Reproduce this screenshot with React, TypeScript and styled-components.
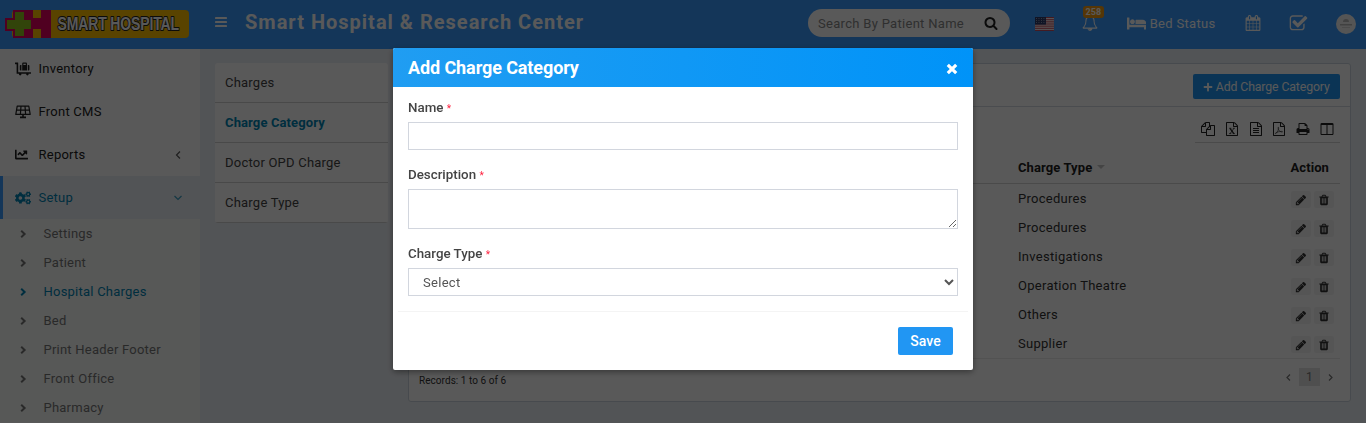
import React from "react";
import styled, { createGlobalStyle, css } from "styled-components";
import { FaChartLine, FaCogs, FaLuggageCart, FaPlus } from "react-icons/fa";

const GlobalStyle = createGlobalStyle`
  *, *::before, *::after { box-sizing: border-box; }
  html, body { margin: 0; padding: 0; height: 100%; overflow: hidden; }
  body {
    font-family: Roboto, "Liberation Sans", sans-serif;
    font-size: 13px;
    line-height: 19px;
    color: #333;
    background: #ecf0f5;
  }
`;

/* ---------- icons ---------- */

const FILE_BASE =
  "M1596 380q28 28 48 76t20 88v1152q0 40-28 68t-68 28h-1344q-40 0-68-28t-28-68v-1600q0-40 28-68t68-28h896q40 0 88 20t76 48zm-444-244v376h376q-10-29-22-41l-313-313q-12-12-41-22zm384 1528v-1024h-416q-40 0-68-28t-28-68v-416h-768v1536h1280z";

const PATHS = {
  pencil:
    "M491 1536l91-91-235-235-91 91v107h128v128h107zm523-928q0-22-22-22-10 0-17 7l-542 542q-7 7-7 17 0 22 22 22 10 0 17-7l542-542q7-7 7-17zm-54-192l416 416-832 832h-416v-416zm683 96q0 53-37 90l-166 166-416-416 166-165q36-38 90-38 53 0 91 38l235 234q37 39 37 91z",
  trash:
    "M704 1376v-704q0-14-9-23t-23-9h-64q-14 0-23 9t-9 23v704q0 14 9 23t23 9h64q14 0 23-9t9-23zm256 0v-704q0-14-9-23t-23-9h-64q-14 0-23 9t-9 23v704q0 14 9 23t23 9h64q14 0 23-9t9-23zm256 0v-704q0-14-9-23t-23-9h-64q-14 0-23 9t-9 23v704q0 14 9 23t23 9h64q14 0 23-9t9-23zm-544-992h448l-48-117q-7-9-17-11h-317q-10 2-17 11zm928 32v64q0 14-9 23t-23 9h-96v948q0 83-47 143.5t-113 60.5h-832q-66 0-113-58.5t-47-141.5v-952h-96q-14 0-23-9t-9-23v-64q0-14 9-23t23-9h309l70-167q15-37 54-63t79-26h320q40 0 79 26t54 63l70 167h309q14 0 23 9t9 23z",
  search:
    "M1216 832q0-185-131.5-316.5t-316.5-131.5-316.5 131.5-131.5 316.5 131.5 316.5 316.5 131.5 316.5-131.5 131.5-316.5zm512 832q0 52-38 90t-90 38q-54 0-90-38l-343-342q-179 124-399 124-143 0-273.5-55.5t-225-150-150-225-55.5-273.5 55.5-273.5 150-225 225-150 273.5-55.5 273.5 55.5 225 150 150 225 55.5 273.5q0 220-124 399l343 343q37 37 37 90z",
  print:
    "M448 1536h896v-256h-896v256zm0-640h896v-384h-160q-40 0-68-28t-28-68v-160h-640v640zm1152 64q0-26-19-45t-45-19-45 19-19 45 19 45 45 19 45-19 19-45zm128 0v416q0 13-9.5 22.5t-22.5 9.5h-224v160q0 40-28 68t-68 28h-960q-40 0-68-28t-28-68v-160h-224q-13 0-22.5-9.5t-9.5-22.5v-416q0-79 56.5-135.5t135.5-56.5h64v-544q0-40 28-68t68-28h672q40 0 88 20t76 48l152 152q28 28 48 76t20 88v256h64q79 0 135.5 56.5t56.5 135.5z",
  columns:
    "M224 1536h608v-1152h-640v1120q0 13 9.5 22.5t22.5 9.5zm1376-32v-1120h-640v1152h608q13 0 22.5-9.5t9.5-22.5zm128-1216v1216q0 66-47 113t-113 47h-1344q-66 0-113-47t-47-113v-1216q0-66 47-113t113-47h1344q66 0 113 47t47 113z",
  text:
    FILE_BASE +
    "M512 800q0-14 9-23t23-9h704q14 0 23 9t9 23v64q0 14-9 23t-23 9h-704q-14 0-23-9t-9-23v-64zm736 224q14 0 23 9t9 23v64q0 14-9 23t-23 9h-704q-14 0-23-9t-9-23v-64q0-14 9-23t23-9h704zm0 256q14 0 23 9t9 23v64q0 14-9 23t-23 9h-704q-14 0-23-9t-9-23v-64q0-14 9-23t23-9h704z",
  copy: "M1696 384q40 0 68 28t28 68v1216q0 40-28 68t-68 28h-960q-40 0-68-28t-28-68v-288h-544q-40 0-68-28t-28-68v-672q0-40 20-88t48-76l408-408q28-28 76-48t88-20h416q40 0 68 28t28 68v328q68-40 128-40h416zm-544 213l-299 299h299v-299zm-640-384l-299 299h299v-299zm196 647l316-316v-416h-384v416q0 40-28 68t-68 28h-416v640h512v-256q0-40 20-88t48-76zm956 804v-1152h-384v416q0 40-28 68t-68 28h-416v640h896z",
  calendar:
    "M192 1664h288v-288h-288v288zm352 0h320v-288h-320v288zm-352-352h288v-320h-288v320zm352 0h320v-320h-320v320zm-352-384h288v-288h-288v288zm736 736h320v-288h-320v288zm-384-736h320v-288h-320v288zm768 736h288v-288h-288v288zm-384-352h320v-320h-320v320zm-352-864v-288q0-13-9.5-22.5t-22.5-9.5h-64q-13 0-22.5 9.5t-9.5 22.5v288q0 13 9.5 22.5t22.5 9.5h64q13 0 22.5-9.5t9.5-22.5zm736 864h288v-320h-288v320zm-384-384h320v-288h-320v288zm384 0h288v-288h-288v288zm32-480v-288q0-13-9.5-22.5t-22.5-9.5h-64q-13 0-22.5 9.5t-9.5 22.5v288q0 13 9.5 22.5t22.5 9.5h64q13 0 22.5-9.5t9.5-22.5zm384-64v1280q0 52-38 90t-90 38h-1408q-52 0-90-38t-38-90v-1280q0-52 38-90t90-38h128v-96q0-66 47-113t113-47h64q66 0 113 47t47 113v96h384v-96q0-66 47-113t113-47h64q66 0 113 47t47 113v96h128q52 0 90 38t38 90z",
  check:
    "M1472 930v318q0 119-84.5 203.5t-203.5 84.5h-832q-119 0-203.5-84.5t-84.5-203.5v-832q0-119 84.5-203.5t203.5-84.5h832q63 0 117 25 15 7 18 23 3 17-9 29l-49 49q-10 10-23 10-3 0-9-2-23-6-45-6h-832q-66 0-113 47t-47 113v832q0 66 47 113t113 47h832q66 0 113-47t47-113v-254q0-13 9-22l64-64q10-10 23-10 6 0 12 3 20 8 20 29zm231-489l-814 814q-24 24-57 24t-57-24l-430-430q-24-24-24-57t24-57l110-110q24-24 57-24t57 24l263 263 647-647q24-24 57-24t57 24l110 110q24 24 24 57t-24 57z",
  bell: "M912 1696q0-16-16-16-59 0-101.5-42.5t-42.5-101.5q0-16-16-16t-16 16q0 73 51.5 124.5t124.5 51.5q16 0 16-16zm-666-288h1300q-266-300-266-832 0-51-24-105t-69-103-121.5-80.5-169.5-31.5-169.5 31.5-121.5 80.5-69 103-24 105q0 532-266 832zm1482 0q0 52-38 90t-90 38h-448q0 106-75 181t-181 75-181-75-75-181h-448q-52 0-90-38t-38-90q50-42 91-88t85-119.5 74.5-158.5 50-206 19.5-260q0-152 117-282.5t307-158.5q-8-19-8-39 0-40 28-68t68-28 68 28 28 68q0 20-8 39 190 28 307 158.5t117 282.5q0 139 19.5 260t50 206 74.5 158.5 85 119.5 91 88z",
};

const Glyph = ({ name, size }: { name: keyof typeof PATHS; size: number }) => (
  <svg width={size} height={size} viewBox="0 0 1792 1792" fill="currentColor" aria-hidden>
    <path d={PATHS[name]} />
  </svg>
);

const BarsIcon = () => (
  <svg width="12" height="10" viewBox="0 0 12 10" fill="currentColor" aria-hidden>
    <rect width="12" height="2" rx="0.4" />
    <rect y="4" width="12" height="2" rx="0.4" />
    <rect y="8" width="12" height="2" rx="0.4" />
  </svg>
);

const BedIcon = () => (
  <svg width="19.4" height="17" viewBox="0 0 2048 1792" fill="currentColor" aria-hidden>
    <path d="M256 1024h1728q26 0 45 19t19 45v448h-256v-256h-1536v256h-256v-1216q0-26 19-45t45-19h128q26 0 45 19t19 45v704zm576-320q0-106-75-181t-181-75-181 75-75 181 75 181 181 75 181-75 75-181zm1216 256v-64q0-159-112.5-271.5t-271.5-112.5h-704q-26 0-45 19t-19 45v384h1408z" />
  </svg>
);

const SolarPanelIcon = () => (
  <svg width="16" height="14" viewBox="0 0 16 14" fill="none" stroke="currentColor" strokeWidth="1.2" aria-hidden>
    <path d="M2.2 1.1H13.8L15.2 9.4H0.8ZM1.5 5.2H14.5M6 1.1L5.4 9.4M10 1.1L10.6 9.4" strokeLinejoin="round" />
    <path d="M8 9.4V12.3M5 12.4H11" strokeWidth="1.6" />
  </svg>
);

const ExcelIcon = ({ size }: { size: number }) => (
  <svg width={size} height={size} viewBox="0 0 1792 1792" fill="none" stroke="currentColor" aria-hidden>
    <path d={FILE_BASE} fill="currentColor" stroke="none" />
    <path d="M640 810L1130 1480" strokeWidth="170" />
    <path d="M1140 810L660 1480M540 800h280M1000 800h260M530 1485h270M990 1485h270" strokeWidth="100" />
  </svg>
);

const PdfIcon = ({ size }: { size: number }) => (
  <svg width={size} height={size} viewBox="0 0 1792 1792" fill="none" stroke="currentColor" aria-hidden>
    <path d={FILE_BASE} fill="currentColor" stroke="none" />
    <path
      d="M430 1500q180-60 330-400 130-300 70-420-60-30-60 80 30 280 240 430 200 130 340 90 20-90-180-80-420 20-680 190-90 60-60 110z"
      strokeWidth="75"
    />
  </svg>
);

const Chevron = ({ d, w, h, stroke = 1.2 }: { d: string; w: number; h: number; stroke?: number }) => (
  <svg width={w} height={h} viewBox={`0 0 ${w} ${h}`} fill="none" stroke="currentColor" strokeWidth={stroke} aria-hidden>
    <path d={d} />
  </svg>
);

const Logo = () => (
  <svg width="190" height="30" viewBox="0 0 190 30" role="img" aria-label="Smart Hospital">
    <rect x="12" y="1" width="177" height="28" rx="4" fill="#ffbf00" />
    <path d="M13 1H33V29H13V22H5V9H13ZM33 9H41V1H51V29H41V20H33Z" fill="#e4005e" />
    <path d="M15 3H24V11H31V20H24V27H15V20H7V11H15Z" fill="#8fc31f" />
    <text
      transform="translate(57.5 21.2) scale(0.8 1)"
      fontFamily='"Liberation Sans", sans-serif'
      fontWeight="700"
      fontSize="17.5"
      textLength="152"
      fill="#fff"
      stroke="#222"
      strokeWidth="2"
      strokeLinejoin="round"
      paintOrder="stroke"
    >
      SMART HOSPITAL
    </text>
  </svg>
);

const Flag = () => (
  <svg width="19" height="14" viewBox="0 0 19 14" aria-hidden>
    <rect width="19" height="14" fill="#fff" />
    {[0, 1, 2, 3, 4, 5, 6].map((i) => (
      <rect key={i} y={i * 2.15} width="19" height="1.08" fill="#c0475a" />
    ))}
    <rect width="11" height="7.6" fill="#2b3a6b" />
    {[1.5, 3.5, 5.5].map((y) =>
      [1.5, 4, 6.5, 9].map((x) => <circle key={`${x}-${y}`} cx={x} cy={y} r="0.4" fill="#fff" />)
    )}
  </svg>
);

/* ---------- top bar ---------- */

const TopBar = styled.header`
  display: flex;
  align-items: center;
  height: 49px;
  padding: 0 10px 0 0;
  background: #399bff;
  color: #fff;
`;
const LogoCell = styled.div`
  width: 215px;
  height: 30px;
  margin-top: -1px;
`;
const MenuToggle = styled.button`
  display: flex;
  width: 30px;
  padding: 0;
  border: 0;
  margin-top: -5px;
  background: none;
  color: #fff;
`;
const Brand = styled.div`
  flex: 1;
  font-size: 20px;
  font-weight: 700;
  line-height: 26px;
  letter-spacing: 1px;
  margin-top: -5px;
`;
const SearchBox = styled.div`
  display: flex;
  align-items: center;
  justify-content: space-between;
  width: 202px;
  height: 28px;
  margin-top: -3px;
  padding: 0 12px 0 10px;
  border-radius: 14px;
  background: #fff;
  color: #222;
  svg { display: block; }
`;
const SearchText = styled.span`
  color: #888;
  letter-spacing: 0.3px;
`;
const NavIcons = styled.nav`
  display: flex;
  align-items: center;
  width: 346px;
  height: 30px;
  margin-top: -2px;
  padding-left: 25px;
  svg { display: block; }
`;
const BellCell = styled.div`
  position: relative;
  margin: -2px 0 0 28px;
  width: 16px;
`;
const BellBadge = styled.span`
  position: absolute;
  left: 1px;
  top: -9px;
  width: 21px;
  height: 12px;
  border-radius: 3px;
  background: #f39c12;
  color: #fff;
  font-size: 9px;
  font-weight: 700;
  line-height: 12px;
  text-align: center;
  letter-spacing: 0.2px;
`;
const BedStatus = styled.div`
  display: flex;
  align-items: center;
  gap: 3.4px;
  width: 119px;
  margin-left: 29px;
  letter-spacing: 0.3px;
`;
const NavCell = styled.div<{ $w: number }>`
  width: ${(p) => p.$w}px;
  margin-top: -1px;
`;
const Avatar = styled.div`
  display: flex;
  align-items: center;
  justify-content: center;
  width: 20px;
  height: 20px;
  border-radius: 50%;
  background: #f3f3f3;
  color: #bbb;
`;

/* ---------- page frame ---------- */

const Body = styled.div`
  display: flex;
  height: 374px;
  overflow: hidden;
`;
const Sidebar = styled.aside`
  width: 200px;
  height: 400px;
  margin-top: -2px;
  background: #fff;
`;
const MenuItem = styled.div<{ $active?: boolean }>`
  display: flex;
  align-items: center;
  height: 43px;
  padding: 0 18px 0 15px;
  color: #222;
  letter-spacing: 0.25px;
  > svg { opacity: 0.75; }
  ${(p) =>
    p.$active &&
    css`
      padding-left: 12px;
      border-left: 3px solid #399bff;
      background: #ecf0f5;
      color: #0084b4;
    `}
`;
const MenuIcon = styled.span`
  display: flex;
  width: 23.5px;
  svg { display: block; }
`;
const MenuLabel = styled.span`
  flex: 1;
`;
const SubMenu = styled.div`
  background: #f9fbf9;
`;
const SubItem = styled.div<{ $active?: boolean }>`
  display: flex;
  align-items: center;
  height: 29px;
  padding-left: 20px;
  color: ${(p) => (p.$active ? "#0084b4" : "#777")};
  letter-spacing: 0.23px;
  svg { display: block; margin-right: 16.5px; }
`;
const Content = styled.main`
  display: flex;
  flex: 1;
  align-items: flex-start;
  gap: 20px;
  padding: 14px 15px;
`;
const TabList = styled.div`
  width: 173px;
  border-radius: 3px;
  overflow: hidden;
  background: #fff;
`;
const Tab = styled.div<{ $active?: boolean }>`
  height: 40px;
  padding: 0 10px;
  border-bottom: 1px solid #d0d0d0;
  line-height: 39px;
  letter-spacing: ${(p) => (p.$active ? "0.12px" : "0.22px")};
  font-weight: ${(p) => (p.$active ? 700 : 400)};
  color: ${(p) => (p.$active ? "#0084b4" : "#444")};
`;
const Panel = styled.section`
  flex: 1;
  height: 339px;
  border: 1px solid #cbd5df;
  border-radius: 3px;
  background: #fff;
`;
const PanelHead = styled.div`
  display: flex;
  justify-content: flex-end;
  height: 43px;
  padding: 10px 10px 0;
  border-bottom: 1px solid #d5dbe2;
`;
const AddButton = styled.button`
  display: flex;
  align-items: center;
  justify-content: center;
  gap: 2.5px;
  width: 147px;
  height: 25px;
  padding: 1px 0 0;
  border: 0;
  border-radius: 2px;
  background: #2196f3;
  color: #fff;
  font: 400 12.3px/19px Roboto, sans-serif;
  letter-spacing: -0.12px;
`;
const PanelBody = styled.div`
  display: flex;
  flex-direction: column;
  padding: 9px 10px 0;
`;
const ExportBar = styled.div`
  display: flex;
  align-items: center;
  align-self: flex-end;
  justify-content: space-between;
  width: 145px;
  height: 27px;
  padding: 0 6px;
  border-bottom: 1px solid #d5d5d5;
  color: #222;
  svg { display: block; }
`;
const Table = styled.div`
  border-bottom: 1px solid #eaeaea;
  letter-spacing: 0.28px;
`;
const Row = styled.div<{ $head?: boolean }>`
  display: grid;
  grid-template-columns: 1fr 261px 61px;
  align-items: center;
  height: ${(p) => (p.$head ? 41 : 29)}px;
  ${(p) =>
    p.$head &&
    css`
      padding-top: 8px;
      border-bottom: 1px solid #d5d5d5;
      font-weight: 700;
      letter-spacing: 0.1px;
      color: #222;
    `}
`;
const TypeCell = styled.div`
  display: flex;
  align-items: center;
  gap: 5px;
`;
const SortCaret = styled.span`
  border: 4px solid transparent;
  border-top-color: #c4c4c4;
  border-bottom: 0;
`;
const ActionCell = styled.div<{ $head?: boolean }>`
  display: flex;
  gap: 3px;
  padding-right: ${(p) => (p.$head ? 11 : 6)}px;
  margin-top: ${(p) => (p.$head ? 0 : 2)}px;
  justify-content: flex-end;
`;
const IconButton = styled.button`
  display: flex;
  align-items: center;
  justify-content: center;
  width: 20px;
  height: 17px;
  padding: 0;
  border: 0;
  border-radius: 2px;
  background: #f4f4f4;
  color: #333;
`;
const TableFoot = styled.div`
  display: flex;
  align-items: center;
  justify-content: space-between;
  height: 40px;
  font-size: 10px;
  letter-spacing: 0.05px;
`;
const Records = styled.span`
  margin-top: 2px;
`;
const Pager = styled.div`
  display: flex;
  align-items: center;
  gap: 8px;
  padding-right: 7px;
  margin-top: -4px;
  color: #777;
`;
const PageNumber = styled.span`
  width: 21px;
  height: 18px;
  background: #e1e1e1;
  font-size: 12px;
  line-height: 18px;
  text-align: center;
`;

/* ---------- dialog ---------- */

const Backdrop = styled.div`
  position: fixed;
  inset: 0;
  display: flex;
  align-items: flex-start;
  justify-content: center;
  padding-top: 48px;
  background: rgba(0, 0, 0, 0.65);
`;
const Dialog = styled.form`
  width: 580px;
  height: 322px;
  border-radius: 2px;
  overflow: hidden;
  background: #fff;
  box-shadow: 0 2px 6px rgba(0, 0, 0, 0.4);
`;
const DialogHead = styled.div`
  display: flex;
  align-items: center;
  justify-content: space-between;
  height: 39px;
  padding: 0 15px;
  background: linear-gradient(to right, #209df2, #0093f8);
  color: #fff;
`;
const DialogTitle = styled.h4`
  margin: 0;
  font-size: 18px;
  font-weight: 700;
  line-height: 24px;
  letter-spacing: -0.1px;
`;
const CloseButton = styled.button`
  display: flex;
  padding: 0;
  border: 0;
  margin-top: 3px;
  background: none;
  color: #fff;
`;
const DialogBody = styled.div`
  padding: 11px 15px 0;
`;
const Field = styled.div`
  display: flex;
  flex-direction: column;
  margin-bottom: 15px;
`;
const Label = styled.label`
  margin-bottom: 5px;
  font-size: 13.33px;
  font-weight: 500;
  height: 19px;
  line-height: 19px;
  color: #444;
`;
const Required = styled.small`
  font-size: 10px;
  font-weight: 400;
  color: #ff1f3d;
`;
const control = css`
  display: block;
  width: 100%;
  border: 1px solid #d2d6de;
  border-radius: 0;
  outline: 0;
  background: #fff;
  color: #555;
  font: 400 13px/19px Roboto, sans-serif;
  letter-spacing: 0.3px;
`;
const Input = styled.input`
  ${control}
  height: 28px;
  padding: 4px 10px;
`;
const TextArea = styled.textarea`
  ${control}
  height: 40px;
  padding: 4px 10px;
`;
const Select = styled.select`
  ${control}
  height: 28px;
  padding: 3px 0 3px 10px;
`;
const DialogFoot = styled.div`
  display: flex;
  justify-content: flex-end;
  margin: 0 5px;
  padding: 15px 15px 0;
  border-top: 1px solid #f4f4f4;
`;
const SaveButton = styled.button`
  width: 55px;
  height: 28px;
  padding: 0;
  border: 0;
  border-radius: 2px;
  background: #2196f3;
  color: #fff;
  font: 500 14px/20px Roboto, sans-serif;
`;

const subItems = ["Settings", "Patient", "Hospital Charges", "Bed", "Print Header Footer", "Front Office", "Pharmacy"];
const tabs = ["Charges", "Charge Category", "Doctor OPD Charge", "Charge Type"];
const chargeTypes = ["Procedures", "Procedures", "Investigations", "Operation Theatre", "Others", "Supplier"];

const TopNavigation = () => (
  <TopBar>
    <LogoCell><Logo /></LogoCell>
    <MenuToggle type="button" aria-label="Toggle menu"><BarsIcon /></MenuToggle>
    <Brand>Smart Hospital &amp; Research Center</Brand>
    <SearchBox>
      <SearchText>Search By Patient Name</SearchText>
      <Glyph name="search" size={14} />
    </SearchBox>
    <NavIcons>
      <Flag />
      <BellCell>
        <Glyph name="bell" size={16} />
        <BellBadge>258</BellBadge>
      </BellCell>
      <BedStatus><BedIcon />Bed Status</BedStatus>
      <NavCell $w={44}><Glyph name="calendar" size={16} /></NavCell>
      <NavCell $w={47}><Glyph name="check" size={19} /></NavCell>
      <Avatar>
        <svg width="14" height="12" viewBox="0 0 14 12" fill="currentColor" aria-hidden>
          <path d="M4 4a3 3 0 0 1 6 0zM1 6h12v1.6H1zM3 9.5h8v0.6H3z" />
        </svg>
      </Avatar>
    </NavIcons>
  </TopBar>
);

const SideMenu = () => (
  <Sidebar>
    <MenuItem><MenuIcon><FaLuggageCart size={16} /></MenuIcon><MenuLabel>Inventory</MenuLabel></MenuItem>
    <MenuItem><MenuIcon><SolarPanelIcon /></MenuIcon><MenuLabel>Front CMS</MenuLabel></MenuItem>
    <MenuItem>
      <MenuIcon><FaChartLine size={13} /></MenuIcon>
      <MenuLabel>Reports</MenuLabel>
      <Chevron w={8} h={8} d="M6 0.5L2.5 4L6 7.5" />
    </MenuItem>
    <MenuItem $active>
      <MenuIcon><FaCogs size={16} /></MenuIcon>
      <MenuLabel>Setup</MenuLabel>
      <Chevron w={9} h={8} d="M1.5 2L5 5.5L8.5 2" />
    </MenuItem>
    <SubMenu>
      {subItems.map((item) => (
        <SubItem key={item} $active={item === "Hospital Charges"}>
          <Chevron w={7} h={8} stroke={2} d="M1.2 0.8L4.6 4L1.2 7.2" />
          {item}
        </SubItem>
      ))}
    </SubMenu>
  </Sidebar>
);

const ChargePanel = () => (
  <Panel>
    <PanelHead>
      <AddButton type="button"><FaPlus size={10} />Add Charge Category</AddButton>
    </PanelHead>
    <PanelBody>
      <ExportBar>
        <Glyph name="copy" size={14} />
        <ExcelIcon size={14} />
        <Glyph name="text" size={14} />
        <PdfIcon size={14} />
        <Glyph name="print" size={14} />
        <Glyph name="columns" size={14} />
      </ExportBar>
      <Table>
        <Row $head>
          <span />
          <TypeCell>Charge Type<SortCaret /></TypeCell>
          <ActionCell $head>Action</ActionCell>
        </Row>
        {chargeTypes.map((type, i) => (
          <Row key={i}>
            <span />
            <TypeCell>{type}</TypeCell>
            <ActionCell>
              <IconButton type="button" aria-label="Edit"><Glyph name="pencil" size={12} /></IconButton>
              <IconButton type="button" aria-label="Delete"><Glyph name="trash" size={12} /></IconButton>
            </ActionCell>
          </Row>
        ))}
      </Table>
      <TableFoot>
        <Records>Records: 1 to 6 of 6</Records>
        <Pager>
          <Chevron w={5} h={7} d="M4 0.5L1 3.5L4 6.5" />
          <PageNumber>1</PageNumber>
          <Chevron w={5} h={7} d="M1 0.5L4 3.5L1 6.5" />
        </Pager>
      </TableFoot>
    </PanelBody>
  </Panel>
);

const AddCategoryDialog = () => (
  <Backdrop>
    <Dialog>
      <DialogHead>
        <DialogTitle>Add Charge Category</DialogTitle>
        <CloseButton type="button" aria-label="Close">
          <Chevron w={12} h={12} stroke={3.2} d="M1.8 1.8L10.2 10.2M10.2 1.8L1.8 10.2" />
        </CloseButton>
      </DialogHead>
      <DialogBody>
        <Field>
          <Label>Name <Required>*</Required></Label>
          <Input type="text" />
        </Field>
        <Field>
          <Label>Description <Required>*</Required></Label>
          <TextArea />
        </Field>
        <Field>
          <Label>Charge Type <Required>*</Required></Label>
          <Select defaultValue=""><option value="">Select</option></Select>
        </Field>
      </DialogBody>
      <DialogFoot><SaveButton type="button">Save</SaveButton></DialogFoot>
    </Dialog>
  </Backdrop>
);

export default function App() {
  return (
    <>
      <GlobalStyle />
      <TopNavigation />
      <Body>
        <SideMenu />
        <Content>
          <TabList>
            {tabs.map((tab) => (
              <Tab key={tab} $active={tab === "Charge Category"}>{tab}</Tab>
            ))}
          </TabList>
          <ChargePanel />
        </Content>
      </Body>
      <AddCategoryDialog />
    </>
  );
}
